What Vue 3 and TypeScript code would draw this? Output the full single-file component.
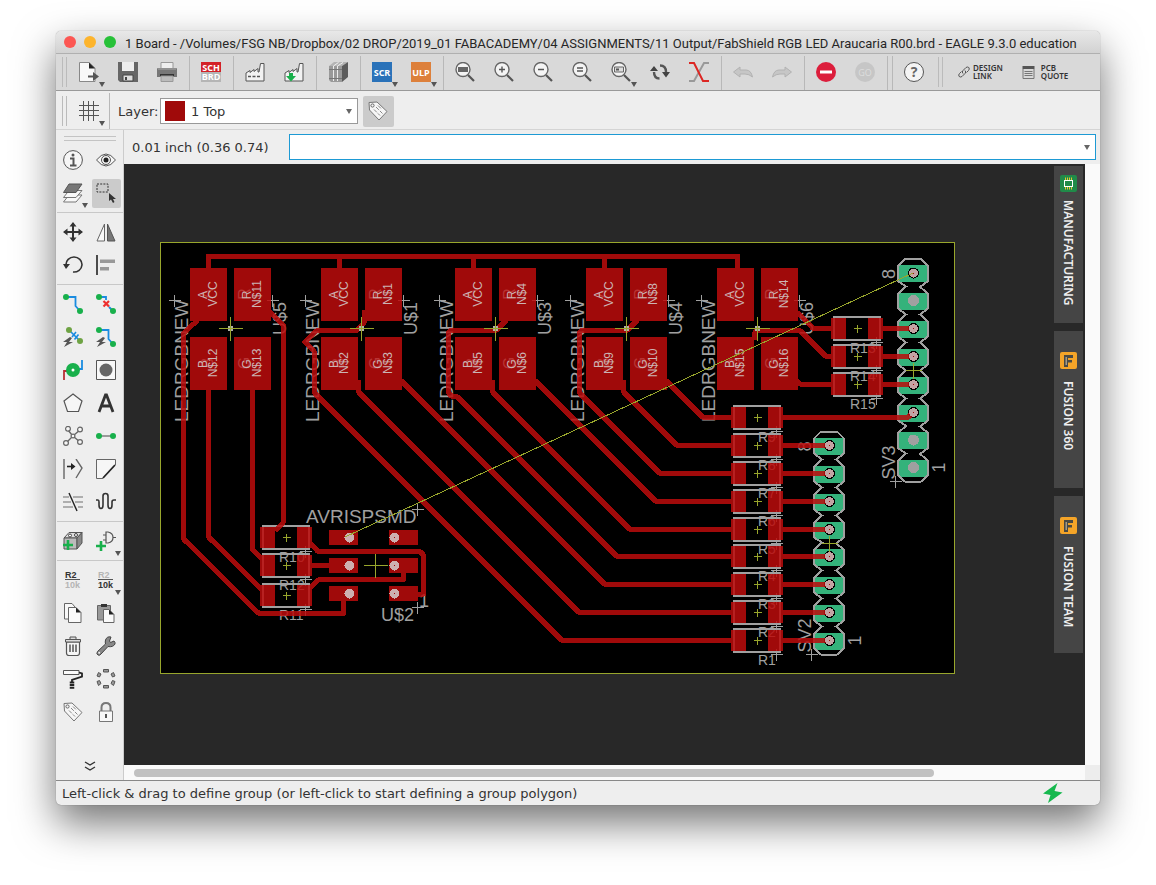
<script setup lang="ts">
import { ref } from 'vue'

interface Tool { name: string; icon: string; menu?: boolean; active?: boolean }
interface Resistor { name: string; x: number; y: number; dx: number }

const title =
  '1 Board - /Volumes/FSG NB/Dropbox/02 DROP/2019_01 FABACADEMY/04 ASSIGNMENTS/11 Output/FabShield RGB LED Araucaria R00.brd - EAGLE 9.3.0 education'
const layer = ref('1 Top')
const command = ref('')

const lens = '<path d="M13 13l6 6" stroke="#555" stroke-width="2.2"/><circle cx="8" cy="7.500" r="7" fill="#f4f4f4" stroke="#666" stroke-width="1.4"/>'
const factory = '<path d="M1 19V11L5 8.500V10.500L9 7.500V9.500L13 6.500V10H14L15.500 1.500H19V19Z" fill="#f2f2f2" stroke="#555"/>'
const tag = '<path d="M1 1.500L9 1L19 10.500L11 19L1.500 9Z" fill="#f6f6f6" stroke="#777"/><circle cx="4.500" cy="4.500" r="1.600" fill="none" stroke="#666"/><path d="M8 6l6.500 6.500M6 8.500l6 6M10 4.500l3 3" stroke="#888" stroke-dasharray="4 1.500"/>'
const blob = (x: number, y: number, c = '#18b04b') => `<circle cx="${x}" cy="${y}" r="3" fill="${c}"/>`
const bolt = '<path d="M7 10L0 15H4L1 20L10 15H6L9 11Z" fill="#555"/>'

const fileTools: Tool[][] = [
  [
    { name: 'New', menu: true, icon: '<path d="M.5 .5H10L16 6V19.500H.5Z" fill="#f8f8f8" stroke="#888"/><path d="M10 .5L16 6.500H10Z" fill="#222"/><path d="M9 13.500H14V10L20 14.500L14 19V15.500H9Z" fill="#555"/>' },
    { name: 'Save', icon: '<path d="M0 0H20V20H2L0 18Z" fill="#666"/><path d="M4 0H16V9H4Z" fill="#eee"/><path d="M5 13H15V19H5Z" fill="#ddd" stroke="#444"/><path d="M7 15H9V18H7Z" fill="#444"/>' },
    { name: 'Print', icon: '<path d="M4 .5H16V7H4Z" fill="#eee" stroke="#999"/><path d="M0 7Q0 6 1 6H19Q20 6 20 7V15H0Z" fill="#777"/><path d="M1 7H19" stroke="#aaa"/><path d="M3 12H17V14H3Z" fill="#333"/><path d="M4 14H16V19.500H4Z" fill="#bbb" stroke="#999"/>' },
  ],
  [{ name: 'Switch to schematic', icon: '<path d="M0 0H20V10H0Z" fill="#d32127"/><path d="M0 10H20V20H0Z" fill="#b5b5b5"/><g font-family="Open Sans, sans-serif" font-weight="700" font-size="9" fill="#fff" text-anchor="middle"><text x="10" y="8.500">SCH</text><text x="10" y="18">BRD</text></g>' }],
  [
    { name: 'CAM processor', icon: factory + '<path d="M3 14.500H16" stroke="#555" stroke-width="1.500" stroke-dasharray="3 1.500"/>' },
    { name: 'Manufacturing output', icon: factory + '<path d="M5 11H9V14H12L7 19.500L2 14H5Z" fill="#18b04b"/>' },
  ],
  [{ name: 'Libraries', icon: '<path d="M1 4L6 0H20L14 4Z" fill="#b4b4b4"/><path d="M14 4L20 0V15L14 20Z" fill="#5c5c5c"/><path d="M1 4H14V20H3L1 18Z" fill="#9a9a9a"/><path d="M5.500 4V19M9.500 4V19" stroke="#ececec"/><path d="M1 7.500H14" stroke="#777"/><path d="M1 16.500H14" stroke="#777"/><path d="M5.500 4L10.500 .5M9.500 4L15 .5" stroke="#f0f0f0"/>' }],
  [
    { name: 'Run script', menu: true, icon: '<path d="M0 0H20V20H0Z" fill="#2a72b9"/><text x="10" y="14" font-family="Open Sans, sans-serif" font-weight="700" font-size="9" fill="#fff" text-anchor="middle">SCR</text>' },
    { name: 'Run ULP', menu: true, icon: '<path d="M0 0H20V20H0Z" fill="#dd803b"/><text x="10" y="14" font-family="Open Sans, sans-serif" font-weight="700" font-size="9" fill="#fff" text-anchor="middle">ULP</text>' },
  ],
  [
    { name: 'Zoom to fit', icon: lens + '<path d="M3 5H13V10H3Z" fill="#666"/>' },
    { name: 'Zoom in', icon: lens + '<path d="M5 7.500H11M8 4.500V10.500" stroke="#555" stroke-width="1.400"/>' },
    { name: 'Zoom out', icon: lens + '<path d="M5 7.500H11" stroke="#555" stroke-width="1.400"/>' },
    { name: 'Redraw', icon: lens + '<path d="M5 6H11M5 9H11" stroke="#555" stroke-width="1.300"/>' },
    { name: 'Zoom select', menu: true, icon: lens + '<path d="M3.500 5H12.500V10H3.500Z" fill="#ddd" stroke="#666"/><path d="M5 6.500H8V8.500H5Z" fill="#555"/>' },
    { name: 'Refresh', icon: '<path d="M4 10C4 14 6 16.500 9.500 16.500M10 3.500C14 3.500 16 6 16 10" fill="none" stroke="#555" stroke-width="2.400"/><path d="M0 9L4 4L8 9ZM12 10L16 15.500L20 10Z" fill="#444"/>' },
    { name: 'Swap', icon: '<path d="M20 1H15L5 19H0" fill="none" stroke="#999" stroke-width="2"/><path d="M0 1H5L14 19H20" fill="none" stroke="#dc2723" stroke-width="2"/>' },
  ],
  [
    { name: 'Undo', icon: '<path d="M.5 10L7 5V8H13Q18 8 19.500 15Q16 12 12 12H7V15Z" fill="#c6c6c6" stroke="#b2b2b2"/>' },
    { name: 'Redo', icon: '<path d="M19.500 10L13 5V8H7Q2 8 .5 15Q4 12 8 12H13V15Z" fill="#c6c6c6" stroke="#b2b2b2"/>' },
  ],
  [
    { name: 'Stop', icon: '<circle cx="10" cy="10" r="10" fill="#dc1e3c"/><path d="M4 10H16" stroke="#fff" stroke-width="3"/>' },
    { name: 'Go', icon: '<circle cx="10" cy="10" r="10" fill="#c6c6c6"/><text x="10" y="13.500" font-family="Open Sans, sans-serif" font-size="9" fill="#ddd" text-anchor="middle">GO</text>' },
  ],
  [{ name: 'Help', icon: '<circle cx="10" cy="10" r="9.500" fill="#f4f4f4" stroke="#555"/><text x="10" y="15" font-family="Noto Sans, sans-serif" font-weight="700" font-size="14" fill="#666" text-anchor="middle">?</text>' }],
]

const gridIcon = '<path d="M4.500 0V20M9.500 0V20M14.500 0V20M0 4.500H20M0 9.500H20M0 14.500H20" stroke="#555"/>'

const paletteTools: Tool[][] = [
  [
    { name: 'Info', icon: '<circle cx="10" cy="10" r="9.400" fill="#f6f6f6" stroke="#555"/><path d="M7 8.500H10.500V15M7 15.500H13.500" fill="none" stroke="#555" stroke-width="2"/><circle cx="10" cy="5" r="1.500" fill="#555"/>' },
    { name: 'Show', icon: '<path d="M.5 10Q10 -2 19.500 10Q10 22 .5 10Z" fill="#f6f6f6" stroke="#555"/><circle cx="10" cy="10" r="4.500" fill="none" stroke="#555"/><circle cx="10" cy="10" r="2.500" fill="#222"/>' },
    { name: 'Layer settings', menu: true, icon: '<g fill="#f8f8f8" stroke="#777"><path d="M.5 19L6 12H19L13 19Z"/><path d="M.5 14.500L6 7.500H19L13 14.500Z"/></g><path d="M.5 9.500L6 1H19L13 9.500Z" fill="#777" stroke="#555"/>' },
    { name: 'Group', active: true, icon: '<path d="M1 1H12V9H1Z" fill="none" stroke="#333" stroke-dasharray="2 1.200"/><path d="M13 10V18L15 16.500L17 20L18.500 19L17 16H20Z" fill="#333"/>' },
  ],
  [
    { name: 'Move', icon: '<path d="M2 10H18M10 2V18" stroke="#333" stroke-width="2"/><path d="M10 0L6.500 4.500H13.500ZM10 20L6.500 15.500H13.500ZM0 10L4.500 6.500V13.500ZM20 10L15.500 6.500V13.500Z" fill="#333"/>' },
    { name: 'Mirror', icon: '<path d="M8.500 2V19H1Z" fill="#fafafa" stroke="#666"/><path d="M11.500 2V19H19Z" fill="#777" stroke="#555"/>' },
    { name: 'Rotate', icon: '<path d="M3 10A8 7.500 0 1 1 10 17" fill="none" stroke="#333" stroke-width="1.600"/><path d="M0 9H7L3 14Z" fill="#333"/>' },
    { name: 'Align', icon: '<path d="M1 0V20" stroke="#222" stroke-width="1.600"/><path d="M4 4.500H19V8H4ZM4 12H13V15.500H4Z" fill="#999"/>' },
  ],
  [
    { name: 'Route', icon: '<path d="M3 3H12.500V12L17 17" fill="none" stroke="#1a8ce0" stroke-width="1.800"/>' + blob(3, 3) + blob(17, 17) },
    { name: 'Ripup', icon: '<path d="M3 3H10V6M13 13L17 17" fill="none" stroke="#1a8ce0" stroke-width="1.800"/>' + blob(3, 3) + blob(17, 17) + '<path d="M7.500 7L13 12.500M13 7L7.500 12.500" stroke="#ee2f2f" stroke-width="2.200"/>' },
    { name: 'Fanout', icon: '<path d="M6 3L18 15" stroke="#1a8ce0" stroke-width="1.600"/><path d="M9 10L13 5M11.500 12.500L15.500 7.500" stroke="#1a8ce0" stroke-width="1.600"/>' + blob(6, 3, '#6ea344') + blob(17, 14, '#6ea344') + bolt },
    { name: 'Autorouter', icon: '<path d="M3 3H12.500V12L17 17" fill="none" stroke="#1a8ce0" stroke-width="1.800"/>' + blob(3, 3) + blob(17, 17) + bolt },
    { name: 'Via', icon: '<path d="M1 20V11H6" fill="none" stroke="#b82f35" stroke-width="1.800"/><path d="M19 0V9H15" fill="none" stroke="#1a8ce0" stroke-width="1.800"/><circle cx="10" cy="10" r="7" fill="#18b04b"/><circle cx="10" cy="10" r="1.500" fill="#fff"/>' },
    { name: 'Hole', icon: '<path d="M.5 .5H19.500V19.500H.5Z" fill="#f8f8f8" stroke="#555"/><circle cx="10" cy="10" r="6.500" fill="#666"/>' },
    { name: 'Polygon', icon: '<path d="M10 1L19 8L15.500 18.500H4.500L1 8Z" fill="#f6f6f6" stroke="#555" stroke-width="1.200"/>' },
    { name: 'Text', icon: '<path d="M3 19L9.500 2H10.500L17 19M5.500 13H14.500" fill="none" stroke="#333" stroke-width="2.800"/>' },
    { name: 'Ratsnest', icon: '<path d="M5 4L9 9M17 4L11 9M9 11L3 17M11 11L17 16" stroke="#666" stroke-width="1.400"/><g fill="#f6f6f6" stroke="#666" stroke-width="1.200"><circle cx="5" cy="2.800" r="2.400"/><circle cx="17" cy="3.500" r="2.400"/><circle cx="10" cy="10" r="1.900"/><circle cx="3" cy="17" r="2.400"/><circle cx="17" cy="16" r="2.400"/></g>' },
    { name: 'Signal', icon: '<path d="M3 10H17" stroke="#999" stroke-width="2"/>' + blob(3, 10) + blob(17, 10) },
    { name: 'Split', icon: '<path d="M1 0V20M13 0L19 9L13 19" fill="none" stroke="#666" stroke-width="1.400"/><path d="M4 7.500H11" stroke="#222" stroke-width="1.600"/><path d="M8 4L12.500 7.500L8 11Z" fill="#222"/>' },
    { name: 'Miter', icon: '<path d="M7 19.500H.5V.5H19.500V6" fill="#f6f6f6" stroke="#666"/><path d="M7 19L19 6" stroke="#222" stroke-width="1.800"/>' },
    { name: 'Slice', icon: '<path d="M0 5H6M10 5H20M0 10H8M12 10H20M0 15H10M15 15H20" stroke="#999" stroke-width="1.300"/><path d="M6 1L14 19" stroke="#222" stroke-width="1.400"/>' },
    { name: 'Meander', icon: '<path d="M0 8H2Q3 8 3 10V13Q3 16.500 5 16.500Q7 16.500 7 13V4Q7 1.500 9.500 1.500Q12 1.500 12 4V13Q12 16.500 14 16.500Q16 16.500 16 13V10Q16 8 18 8H20" fill="none" stroke="#333" stroke-width="1.600"/>' },
  ],
  [
    { name: 'Add part', icon: '<path d="M1 7L6 1.500H19L14 7Z" fill="#ddd" stroke="#555"/><path d="M1 7H14V18H1Z" fill="#bbb" stroke="#555"/><path d="M14 7L19 1.500V12L14 18Z" fill="#888" stroke="#555"/><circle cx="7" cy="4.500" r="1.500" fill="#fff" stroke="#444"/><circle cx="13" cy="4" r="1.500" fill="#fff" stroke="#444"/><path d="M0 14H10M5 9V19" stroke="#18b04b" stroke-width="2.600"/>' },
    { name: 'Add gate', menu: true, icon: '<path d="M10 1H12Q17 2 17 6.500Q17 11 12 12H10ZM7 4H10M7 9H10M17 6.500H20" fill="none" stroke="#555" stroke-width="1.200"/><path d="M0 15H10M5 10V20" stroke="#18b04b" stroke-width="2.600"/>' },
  ],
  [
    { name: 'Name', icon: '<g font-family="Liberation Sans, sans-serif" font-weight="700" font-size="9"><text x="2" y="8" fill="#333">R2</text><text x="2" y="18" fill="#b5b5b5">10k</text></g><path d="M2 9.500H17" stroke="#555"/>' },
    { name: 'Value', menu: true, icon: '<g font-family="Liberation Sans, sans-serif" font-weight="700" font-size="9"><text x="2" y="8" fill="#b5b5b5">R2</text><text x="2" y="18" fill="#333">10k</text></g><path d="M2 9.500H17" stroke="#555"/>' },
    { name: 'Copy', icon: '<path d="M1.500 .5H9L12 4V16H1.500Z" fill="#f8f8f8" stroke="#666"/><path d="M5.500 4.500H13L18 9.500V19.500H5.500Z" fill="#fafafa" stroke="#666"/><path d="M13 4.500L18 9.500H13Z" fill="#222"/>' },
    { name: 'Paste', icon: '<path d="M1.500 2.500H14.500V17H1.500Z" fill="#999" stroke="#666"/><path d="M5 1H11V4H5Z" fill="#333"/><path d="M7.500 6.500H13L18 11.500V19.500H7.500Z" fill="#fafafa" stroke="#666"/><path d="M13 6.500L18 11.500H13Z" fill="#222"/>' },
    { name: 'Delete', icon: '<path d="M3.500 6H16.500V17Q16.500 19.500 14 19.500H6Q3.500 19.500 3.500 17Z" fill="#f6f6f6" stroke="#555" stroke-width="1.200"/><path d="M2.500 3.500H17.500V6H2.500ZM7 3.500V1H13V3.500" fill="#ddd" stroke="#555"/><path d="M7 8.500V16M10 8.500V16M13 8.500V16" stroke="#555" stroke-width="1.500"/>' },
    { name: 'Change', icon: '<path d="M18 5L14.500 6.500L13.500 5L15 1Q11 0 9.500 4Q9 6 9.500 8L1.500 15.500Q0 18 2 19Q3.500 20 5 18L12 10.500Q17 11.500 19 8Q19.500 6.500 18 5Z" fill="#888" stroke="#444"/><circle cx="3.200" cy="16.800" r="1" fill="#eee"/>' },
    { name: 'Paint format', icon: '<path d="M.5 1.500H16V5.500H.5Z" fill="#fafafa" stroke="#555"/><path d="M16 3.500L19 4.500V7.500L9 11V13" fill="none" stroke="#222" stroke-width="1.800"/><path d="M9 12.500V20" stroke="#222" stroke-width="4.500" stroke-dasharray="2 .6"/>' },
    { name: 'Optimize', icon: '<g fill="#999" stroke="#555"><path d="M7.500 .5H12.500V3H7.500ZM7.500 16.500H12.500V19H7.500ZM1 7L2.500 3.500L5 5L3.500 8ZM15 5L17.500 3.500L19 7L16.500 8ZM1 12.500L3.500 11.500L5 14.500L2.500 16.500ZM16.500 11.500L19 12.500L17.500 16.500L15 14.500Z"/></g>' },
    { name: 'Attribute', icon: tag },
    { name: 'Lock', icon: '<path d="M5.500 9V5.500Q5.500 1 10 1Q14.500 1 14.500 5.500V9" fill="none" stroke="#777" stroke-width="2"/><path d="M3.500 9H16.500V19.500H3.500Z" fill="#f8f8f8" stroke="#777"/><path d="M10 12V16" stroke="#555" stroke-width="2"/>' },
  ],
]

const fusionIcon = '<rect width="17" height="17" rx="2" fill="#f4a428"/><path d="M4 3H13V6H8V8H12V10.500H8V15H4Z" fill="#4a4a44"/><path d="M5.500 13V5H7V13Z" fill="#a39a88"/>'
const sideTabs = [
  { label: 'MANUFACTURING', kind: 'fab', icon: '<rect width="17" height="17" rx="2" fill="#208b49"/><path d="M5.500 2.500V14.500M7.500 2.500V14.500M9.500 2.500V14.500M11.500 2.500V14.500" stroke="#e0c934" stroke-width="1"/><rect x="4.500" y="5.500" width="8" height="6" fill="#208b49" stroke="#fff"/>' },
  { label: 'FUSION 360', kind: 'cloud', icon: fusionIcon },
  { label: 'FUSION TEAM', kind: 'cloud', icon: fusionIcon },
]

// Board geometry
const leds = [
  { x: 190, part: 'U$5', nets: ['N$11', 'N$12', 'N$13'] },
  { x: 321, part: 'U$1', nets: ['N$1', 'N$2', 'N$3'] },
  { x: 455, part: 'U$3', nets: ['N$4', 'N$5', 'N$6'] },
  { x: 586, part: 'U$4', nets: ['N$8', 'N$9', 'N$10'] },
  { x: 717, part: 'U$6', nets: ['N$14', 'N$15', 'N$16'] },
]
const padCells = [
  { letter: 'A', dx: 0, cy: 294, ghost: 23 },
  { letter: 'R', dx: 44, cy: 294, ghost: 16 },
  { letter: 'B', dx: 0, cy: 363, ghost: 23 },
  { letter: 'G', dx: 44, cy: 363, ghost: 16 },
]
const netName = (nets: string[], i: number) => (i === 0 ? 'VCC' : nets[i - 1])

const rows = [640.5, 612.5, 584.5, 556.5, 529.5, 501.5, 473.5, 445.5, 417.5]
const resistors: Resistor[] = [
  ...rows.map((y, i) => ({ name: `R${i + 1}`, x: 757, y, dx: 1 })),
  { name: 'R13', x: 857, y: 328.5, dx: -7 },
  { name: 'R14', x: 857, y: 356.5, dx: -7 },
  { name: 'R15', x: 857, y: 384.5, dx: -7 },
  { name: 'R10', x: 286, y: 537.5, dx: -7 },
  { name: 'R12', x: 286, y: 565.5, dx: -7 },
  { name: 'R11', x: 286, y: 595.5, dx: -7 },
]

const headers = [
  { name: 'SV3', x: 913, ys: [273, 300.5, 328.5, 356.5, 384.5, 412.5, 440, 467.5], open: [1, 6, 7] },
  { name: 'SV2', x: 829, ys: [445.5, 473.5, 501.5, 529.5, 556.5, 584.5, 612.5, 640.5], open: [] as number[] },
]
function headerOutline(x: number, ys: number[]): string {
  const last = ys.length - 1
  const right = ys.map((y, i) => `${x + 15},${y - 7} ${x + 15},${y + 8} ${x + (i === last ? 8 : 7)},${y + 14}`)
  const left = [...ys].reverse().map((y, i) => `${x - 15},${y + 8} ${x - 15},${y - 7} ${x - (i === last ? 8 : 7)},${y - 14}`)
  return `${x + 8},${ys[0] - 14} ${right.join(' ')} ${x - 8},${ys[last] + 14} ${left.join(' ')}`
}

const traces = [
  'M206 256.500H739.500', 'M208.500 256V269', 'M339.500 256V269', 'M473.500 256V269', 'M604.500 256V269', 'M737.500 254V269',
  'M198 320L183.500 333V539L259 613.500H343.500V600',
  'M208.500 389V537L262 590', 'M252.500 389V550L263 560',
  'M269 311L283.500 325.500V522L275 531',
  'M364.500 310V322L357 330.500H317L305 342L314.500 352V393L562 640.500H732',
  'M358.500 380V392L579 612.500H732', 'M401 380.500L605 584.500H732',
  'M506.500 320L496 330.500H450L448.500 333V393L452 396.500H457L617 556.500H732',
  'M492.500 380V392L630 529.500H732', 'M535 380.500L656 501.500H732',
  'M637.500 320L627 330.500H581L579.500 333V393L660 473.500H732',
  'M623.500 380V392L677 445.500H732', 'M666 380.500L703 417.500H732',
  'M782 417.500H908L913 412.500',
  'M797 312L813 328.500H834', 'M754.500 340V333L757 330.500H800L826 356.500H834', 'M797 381L801 384.500H834',
  'M882 328.500H913', 'M882 356.500H913', 'M882 384.500H913',
  ...rows.slice(0, 8).map((y) => `M782 ${y}H829`),
  'M310 543L318 551.500H420L423.500 555V594H417', 'M311 565.500H330', 'M310 588L319 579.500H403.500V572',
]
const ispRows = [537.5, 565.5, 593.5]
const cross = (x: number, y: number, r: number) => `M${x - r} ${y}H${x + r}M${x} ${y - r}V${y + r}`
const silkCrosses = [
  ...leds.flatMap((l) => [cross(l.x - 15.5, 300.5, 6), cross(l.x + 82.5, 300.5, 6)]),
  ...resistors.map((r) => cross(r.x + 19.5, r.y + 14, 6)),
  cross(417.5, 509.5, 6), cross(417.5, 607.5, 6), cross(895.5, 481.5, 6), cross(811.5, 654.5, 6),
].join('')
const originCrosses = [
  ...leds.map((l) => cross(l.x + 40.5, 328.5, 12)),
  ...resistors.map((r) => cross(r.x + 0.5, r.y, 4)),
  cross(375.5, 565.5, 12), cross(913.5, 370.5, 8), cross(829.5, 543.5, 8),
].join('')
</script>

<template>
  <div class="desktop">
    <main class="window">
      <header class="titlebar">
        <button class="light close" aria-label="Close"></button>
        <button class="light minimize" aria-label="Minimize"></button>
        <button class="light maximize" aria-label="Zoom"></button>
        <h1>{{ title }}</h1>
      </header>

      <div class="toolbar main-tools">
        <span class="grip"></span>
        <div v-for="(group, g) in fileTools" :key="g" class="group" :class="{ wide: g === 8 }">
          <button v-for="t in group" :key="t.name" class="tool" :aria-label="t.name">
            <svg class="icon" viewBox="0 0 20 20" v-html="t.icon"></svg>
            <i v-if="t.menu" class="caret"></i>
          </button>
        </div>
        <span class="grip second"></span>
        <button class="link-tool">
          <svg class="chain" viewBox="0 0 12 12" fill="none" stroke="#555"><path d="M5 7.500Q3.500 6 5 4.500L8 1.500Q9.500 .5 10.800 1.500Q12 3 10.500 4.500L8.500 6.500M7 4.500Q8.500 6 7 7.500L4 10.500Q2.500 11.500 1.200 10.500Q0 9 1.500 7.500L3.500 5.500" /></svg>
          <span>DESIGN<br />LINK</span>
        </button>
        <button class="link-tool quote">
          <svg class="sheet" viewBox="0 0 12 13"><path d="M0 0H12V3H0Z" fill="#555" /><path d="M.5 3V12.500H11.500V3M2 5.500H10M2 7.500H10M2 9.500H10" fill="none" stroke="#777" /></svg>
          <span>PCB<br />QUOTE</span>
        </button>
      </div>

      <div class="toolbar layer-tools">
        <span class="grip"></span>
        <div class="group">
          <button class="tool" aria-label="Grid">
            <svg class="icon" viewBox="0 0 20 20" v-html="gridIcon"></svg>
            <i class="caret"></i>
          </button>
        </div>
        <label for="layer">Layer:</label>
        <div class="layer-pick">
          <i class="swatch"></i>
          <select id="layer" v-model="layer"><option>1 Top</option></select>
          <i class="arrow"></i>
        </div>
        <button class="tag-button" aria-label="Attributes">
          <svg class="icon" viewBox="0 0 20 20" v-html="tag"></svg>
        </button>
      </div>

      <div class="body">
        <nav class="palette" aria-label="Tools">
          <span class="palette-grip"></span>
          <div v-for="(group, g) in paletteTools" :key="g" class="palette-group">
            <button v-for="t in group" :key="t.name" class="palette-tool" :class="{ active: t.active }" :aria-label="t.name">
              <svg class="icon" viewBox="0 0 20 20" v-html="t.icon"></svg>
              <i v-if="t.menu" class="caret"></i>
            </button>
          </div>
          <button class="more" aria-label="More tools">
            <svg viewBox="0 0 12 10" fill="none" stroke="#333" stroke-width="1.400"><path d="M1 1L6 4L11 1M1 6L6 9L11 6" /></svg>
          </button>
        </nav>

        <section class="work">
          <div class="command-row">
            <output>0.01 inch (0.36 0.74)</output>
            <div class="command">
              <input v-model="command" aria-label="Command" />
              <button class="history" aria-label="Command history"><i class="arrow"></i></button>
            </div>
          </div>

          <div class="view">
            <div class="canvas">
              <svg class="board" viewBox="124 164 961 601" preserveAspectRatio="xMinYMin meet" shape-rendering="crispEdges">
                <rect x="160.500" y="242.500" width="794" height="431" fill="#000" stroke="#98a62c" />

                <g class="silk">
                  <g v-for="l in leds" :key="l.part">
                    <text class="device" :transform="`translate(${l.x - 2} 422) rotate(-90)`">LEDRGBNEW</text>
                    <text :transform="`translate(${l.x + 96} 335) rotate(-90)`">{{ l.part }}</text>
                  </g>
                  <g v-for="r in resistors" :key="r.name">
                    <rect :x="r.x - 23" :y="r.y - 11.5" width="46" height="23" fill="none" stroke="#a0a0a0" stroke-width="2" />
                    <text class="value" :x="r.x + r.dx" :y="r.y + 24">{{ r.name }}</text>
                  </g>
                  <text class="device" x="306" y="523">AVRISPSMD</text>
                  <text x="381" y="621">U$2</text>
                  <text x="419" y="607">1</text>
                </g>

                <g v-for="h in headers" :key="h.name">
                  <rect v-for="y in h.ys" :key="y" :x="h.x - 16" :y="y - 8" width="32" height="17" rx="4" fill="#34b27b" />
                  <polygon :points="headerOutline(h.x, h.ys)" fill="none" stroke="#a0a0a0" stroke-width="2" />
                  <template v-for="(y, i) in h.ys" :key="y">
                    <circle :cx="h.x + 0.5" :cy="y" r="5.500" :fill="h.open.includes(i) ? '#a0a0a0' : '#000'" />
                  </template>
                  <g class="silk">
                    <text class="centered" :transform="`translate(${h.x - 18} ${h.ys[0] + 1}) rotate(-90)`">8</text>
                    <text class="centered" :transform="`translate(${h.x + 32} ${h.ys[7]}) rotate(-90)`">1</text>
                    <text :transform="`translate(${h.x - 18} ${h.ys[7] + 12}) rotate(-90)`">{{ h.name }}</text>
                  </g>
                </g>
                <path :d="silkCrosses" stroke="#a0a0a0" />

                <g opacity="0.85" fill="#bc0c0c">
                  <g v-for="l in leds" :key="l.part">
                    <rect v-for="c in padCells" :key="c.letter" :x="l.x + c.dx" :y="c.cy < 300 ? 268 : 337" width="37" height="53" />
                  </g>
                  <g v-for="r in resistors" :key="r.name">
                    <rect :x="r.x - 26" :y="r.y - 10.5" width="15" height="21" />
                    <rect :x="r.x + 11" :y="r.y - 10.5" width="15" height="21" />
                  </g>
                  <g v-for="y in ispRows" :key="y">
                    <rect x="329" :y="y - 7.5" width="29" height="15" />
                    <rect x="389" :y="y - 7.5" width="29" height="15" />
                  </g>
                  <path v-for="d in traces" :key="d" :d="d" fill="none" stroke="#bc0c0c" stroke-width="5" stroke-linejoin="round" />
                </g>

                <g v-for="h in headers" :key="h.name">
                  <template v-for="(y, i) in h.ys" :key="y">
                    <g v-if="!h.open.includes(i)">
                      <circle :cx="h.x + 0.5" :cy="y" r="4.500" fill="#c3a4a4" />
                      <rect :x="h.x" :y="y - 0.5" width="1" height="1" fill="#a00a0a" />
                    </g>
                  </template>
                </g>
                <g v-for="y in ispRows" :key="y">
                  <circle cx="349.500" :cy="y" r="5" fill="#cdb0b0" />
                  <circle cx="394.500" :cy="y" r="5" fill="#cdb0b0" />
                  <circle cx="394.500" :cy="y" r="1" fill="#a00a0a" />
                </g>

                <g v-for="l in leds" :key="l.part">
                  <g v-for="(c, i) in padCells" :key="c.letter" class="net">
                    <text class="ghost" :transform="`translate(${l.x + c.dx + c.ghost} ${c.cy}) rotate(-90)`">{{ c.letter }}</text>
                    <text :transform="`translate(${l.x + c.dx + 17} ${c.cy + 1}) rotate(-90)`">{{ c.letter }}</text>
                    <text :transform="`translate(${l.x + c.dx + 27} ${c.cy}) rotate(-90)`">{{ netName(l.nets, i) }}</text>
                  </g>
                  <rect :x="l.x + 38" y="326" width="5" height="5" fill="#b0b0a8" />
                </g>
                <path :d="originCrosses" stroke="#98a62c" />
                <path d="M345 537L913 273" stroke="#98a62c" />
              </svg>

              <div class="side-tabs">
                <button v-for="t in sideTabs" :key="t.label" class="side-tab" :class="t.kind">
                  <svg viewBox="0 0 17 17" v-html="t.icon"></svg>
                  <span>{{ t.label }}</span>
                </button>
              </div>
            </div>
            <div class="track-v"></div>
            <div class="track-h"><span class="thumb"></span></div>
            <div class="corner"></div>
          </div>
        </section>
      </div>

      <footer class="status">
        <span>Left-click &amp; drag to define group (or left-click to start defining a group polygon)</span>
        <svg viewBox="0 0 20 20"><path d="M14.500 0L0 10.500L7.500 12L5 20L19.500 9.500L11.500 8Z" fill="#16b84e" /></svg>
      </footer>
    </main>
  </div>
</template>

<style>
body {
  margin: 0;
  background: #fff;
}
</style>

<style scoped>
.desktop {
  box-sizing: border-box;
  min-height: 100vh;
  padding: 31px 56px 80px;
  display: flex;
  overflow: hidden;
  font-family: "DejaVu Sans", sans-serif;
  font-size: 13px;
  color: #333;
}
button {
  margin: 0;
  padding: 0;
  border: 0;
  background: none;
  color: inherit;
  font: inherit;
}
.window {
  flex: 1;
  min-width: 0;
  display: flex;
  flex-direction: column;
  border-radius: 5px;
  overflow: hidden;
  background: #eee;
  box-shadow: 0 0 1px rgba(0, 0, 0, 0.5), 0 18px 40px rgba(0, 0, 0, 0.55);
}
.titlebar {
  height: 22px;
  flex: none;
  display: flex;
  align-items: center;
  padding: 0 8px;
  border-bottom: 1px solid #b0b0b0;
  background: linear-gradient(#e8e8e8, #d2d2d2);
}
.light {
  width: 12px;
  height: 12px;
  margin-right: 8px;
  border-radius: 50%;
}
.close { background: #fc5753; }
.minimize { background: #fdb42c; }
.maximize { background: #27c138; }
h1 {
  margin: 3px 0 0 1px;
  font: 400 13px/20px Roboto, sans-serif;
  white-space: nowrap;
  color: #262626;
}
.toolbar {
  display: flex;
  align-items: center;
  flex: none;
  padding-left: 6px;
}
.main-tools {
  height: 36px;
  border-bottom: 1px solid #999;
  background: #d9d9d9;
}
.layer-tools {
  box-sizing: border-box;
  height: 39px;
  padding-top: 2px;
  border-bottom: 1px solid #d4d4d4;
}
.grip {
  box-sizing: border-box;
  width: 5px;
  height: 30px;
  margin-right: 2px;
  border: solid #bbb;
  border-width: 0 1px;
}
.grip.second {
  margin: 0 15px 0 5px;
}
.group {
  display: flex;
  align-self: stretch;
}
.main-tools .group + .group::before,
.layer-tools .group::after {
  content: "";
  width: 1px;
  margin: 2px 1px 0 3px;
  background: #b8b8b8;
}
.layer-tools .group::after {
  margin: 0 1px;
}
.main-tools .group.wide::before {
  box-sizing: border-box;
  width: 6px;
  border: solid #b8b8b8;
  border-width: 0 1px;
  background: none;
}
.tool {
  position: relative;
  display: flex;
  align-items: center;
  padding: 0 9px 0 10px;
}
.icon {
  width: 20px;
  height: 20px;
  display: block;
  fill: none;
}
.caret {
  position: absolute;
  right: 3px;
  bottom: 3px;
  border: solid transparent;
  border-width: 5px 3px 0;
  border-top-color: #555;
}
.link-tool {
  display: flex;
  align-items: center;
  gap: 3px;
  font-family: "Noto Sans", sans-serif;
  font-size: 8px;
  font-weight: 600;
  line-height: 8px;
  text-align: left;
}
.link-tool.quote {
  margin-left: 19px;
  gap: 6px;
}
.chain {
  width: 12px;
  height: 12px;
}
.sheet {
  width: 13px;
  height: 13px;
}
.layer-tools label {
  width: 42px;
  margin-left: 7px;
}
.layer-pick {
  position: relative;
  display: flex;
  box-sizing: border-box;
  width: 198px;
  height: 26px;
  border: 1px solid #999;
  background: #fff;
}
.swatch {
  position: absolute;
  left: 4px;
  top: 2px;
  width: 20px;
  height: 20px;
  background: #a00a0a;
  pointer-events: none;
}
select {
  appearance: none;
  flex: 1;
  border: 0;
  padding: 0 20px 0 30px;
  background: transparent;
  color: inherit;
  font: inherit;
}
.arrow {
  border: solid transparent;
  border-width: 5px 3px 0;
  border-top-color: #666;
}
.layer-pick .arrow {
  position: absolute;
  right: 5px;
  top: 10px;
  pointer-events: none;
}
.tag-button {
  display: flex;
  margin-left: 5px;
  padding: 5px 6px 6px 5px;
  border-radius: 2px;
  background: #cbcbcb;
}
.body {
  flex: 1;
  display: flex;
  min-height: 0;
}
.palette {
  flex: none;
  display: flex;
  flex-direction: column;
  width: 66px;
  margin-left: 1px;
  border-right: 1px solid #ccc;
}
.palette-grip {
  height: 3px;
  margin: 6px 7px 5px;
  border: solid #c4c4c4;
  border-width: 1px 0;
}
.palette-group {
  display: grid;
  grid-template-columns: 29px 29px;
  gap: 4px;
  padding: 0 2px 4px;
}
.palette-group + .palette-group {
  padding-top: 5px;
  border-top: 1px solid #c8c8c8;
}
.palette-tool {
  position: relative;
  display: flex;
  height: 29px;
  padding: 4px;
  box-sizing: border-box;
  border-radius: 2px;
}
.palette-tool.active {
  background: #cbcbcb;
}
.palette-tool .caret {
  right: 0;
  bottom: 0;
}
.more {
  margin: auto auto 9px;
  padding: 0;
}
.more svg {
  display: block;
  width: 12px;
  height: 10px;
}
.work {
  flex: 1;
  min-width: 0;
  display: flex;
  flex-direction: column;
}
.command-row {
  flex: none;
  display: flex;
  align-items: center;
  height: 34px;
  padding: 0 4px 0 8px;
}
.command-row output {
  width: 157px;
  flex: none;
  white-space: nowrap;
}
.command {
  flex: 1;
  display: flex;
  box-sizing: border-box;
  height: 26px;
  border: 1px solid #1d9ad4;
  background: #fff;
}
.command input {
  flex: 1;
  border: 0;
  outline: 0;
  background: none;
  font: inherit;
}
.history {
  display: flex;
  align-items: center;
  padding: 0 5px;
}
.view {
  flex: 1;
  min-height: 0;
  display: grid;
  grid-template: 1fr 15px / 1fr 15px;
}
.canvas {
  position: relative;
  min-width: 0;
  background: #282828;
  overflow: hidden;
}
.board {
  display: block;
  width: 100%;
}
.silk text {
  font-family: "Liberation Sans", Arial, sans-serif;
  font-size: 18px;
  fill: #a0a0a0;
}
.silk .device {
  font-size: 19px;
}
.silk .value {
  font-size: 14px;
}
.silk .centered,
.net text {
  text-anchor: middle;
}
.net text {
  font-family: "Liberation Sans", Arial, sans-serif;
  font-size: 12px;
  fill: #ccb4b4;
}
.net .ghost {
  font-size: 16px;
  fill: #b93434;
}
.side-tabs {
  position: absolute;
  top: 2px;
  right: 2px;
  display: flex;
  flex-direction: column;
  gap: 8px;
}
.side-tab {
  box-sizing: border-box;
  display: flex;
  flex-direction: column;
  align-items: center;
  width: 29px;
  height: 157px;
  padding-top: 9px;
  gap: 8px;
  background: #454545;
  color: #eee;
  font-family: "Noto Sans", sans-serif;
  font-size: 12px;
  font-weight: 600;
}
.side-tab.cloud {
  padding-top: 21px;
  gap: 12px;
}
.side-tab svg {
  width: 17px;
  height: 17px;
}
.side-tab span {
  writing-mode: vertical-rl;
  line-height: 17px;
  white-space: nowrap;
}
.track-v,
.track-h {
  background: #fafafa;
}
.track-h {
  display: flex;
  align-items: center;
  padding: 0 10px;
}
.thumb {
  width: 85%;
  height: 8px;
  border-radius: 4px;
  background: #c1c1c1;
}
.corner {
  background: #ededed;
}
.status {
  flex: none;
  display: flex;
  align-items: center;
  justify-content: space-between;
  height: 24px;
  padding: 0 37px 0 6px;
  border-top: 1px solid #888;
}
.status svg {
  width: 20px;
  height: 20px;
}
</style>
